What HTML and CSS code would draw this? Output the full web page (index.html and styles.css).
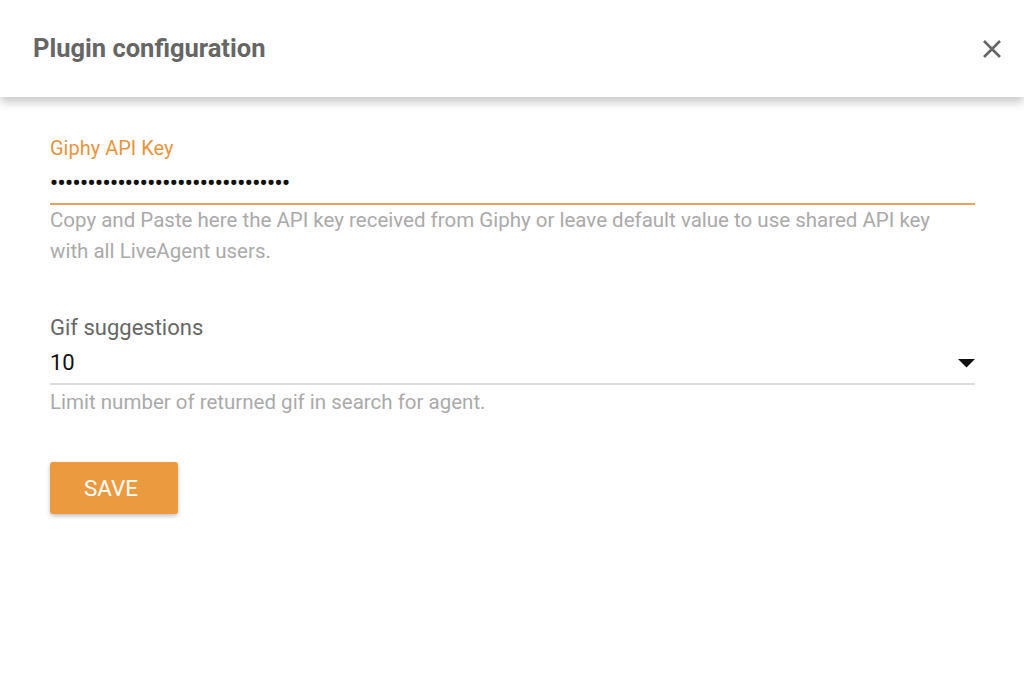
FILE: index.html
```html
<!DOCTYPE html>
<html>
<head>
<meta charset="utf-8">
<link rel="stylesheet" href="styles.css">
</head>
<body>
<div class="dialog">
  <header class="header">
    <h1 class="title">Plugin configuration</h1>
    <button class="close" aria-label="Close">
      <svg width="20" height="20" viewBox="0 0 20 20"><path d="M2 2 L18 18 M18 2 L2 18" stroke="#666" stroke-width="2.6" fill="none"/></svg>
    </button>
  </header>
  <main class="content">
    <div class="field">
      <label class="label label-active">Giphy API Key</label>
      <div class="input input-active"><span class="dots">••••••••••••••••••••••••••••••••</span></div>
      <div class="hint">Copy and Paste here the API key received from Giphy or leave default value to use shared API key with all LiveAgent users.</div>
    </div>
    <div class="field field-select">
      <label class="label">Gif suggestions</label>
      <div class="input select"><span class="value">10</span>
        <svg class="caret" width="17" height="9" viewBox="0 0 17 9"><path d="M0 0 H17 L8.5 8.5 Z" fill="#111"/></svg>
      </div>
      <div class="hint hint-select">Limit number of returned gif in search for agent.</div>
    </div>
    <button class="save">SAVE</button>
  </main>
</div>
</body>
</html>
```
FILE: styles.css
```css
html, body { margin: 0; padding: 0; background: #fff; }
body { font-family: Roboto, "Liberation Sans", sans-serif; width: 1024px; height: 683px; overflow: hidden; }
.dialog { display: flex; flex-direction: column; }
.header {
  height: 97px;
  display: flex;
  align-items: center;
  justify-content: space-between;
  padding: 0 22px 0 33px;
  box-shadow: 0 5px 9px rgba(0,0,0,0.22);
  position: relative;
  z-index: 1;
}
.title { margin: 0; font-size: 25.5px; font-weight: 700; color: #666; padding-bottom: 2px; }
.close { border: 0; background: none; padding: 0; margin: 0; width: 20px; height: 20px; display: flex; cursor: pointer; }
.content { padding: 38px 49px 0 50px; display: flex; flex-direction: column; align-items: flex-start; }
.field { width: 100%; display: flex; flex-direction: column; }
.label { font-size: 20px; color: #666; line-height: 26px; }
.label-active { color: #e8953e; }
.input { border-bottom: 2px solid #ddd; display: flex; align-items: center; box-sizing: border-box; }
.input-active { border-bottom: 2px solid #eda15a; height: 44px; }
.dots { font-size: 22px; letter-spacing: -0.42px; color: #111; padding-left: 0; font-weight: 700; }
.hint { font-size: 20.5px; line-height: 31px; color: #aaa; max-width: 900px; }
.field-select { margin-top: 47px; }
.field-select .label { font-size: 22px; line-height: 28px; color: #666; }
.select { justify-content: space-between; height: 43px; }
.value { font-size: 22px; color: #111; }
.caret { margin-right: 0; margin-top: 1px; }
.hint-select { margin-top: 2px; }
.save {
  margin-top: 44px;
  width: 128px;
  height: 52px;
  border: 0;
  border-radius: 3px;
  background: #ec9a40;
  color: #fff;
  font-family: Roboto, "Liberation Sans", sans-serif;
  font-size: 22.5px;
  padding: 0 6px 0 0;
  box-shadow: 0 2px 4px rgba(0,0,0,0.25);
}
```
